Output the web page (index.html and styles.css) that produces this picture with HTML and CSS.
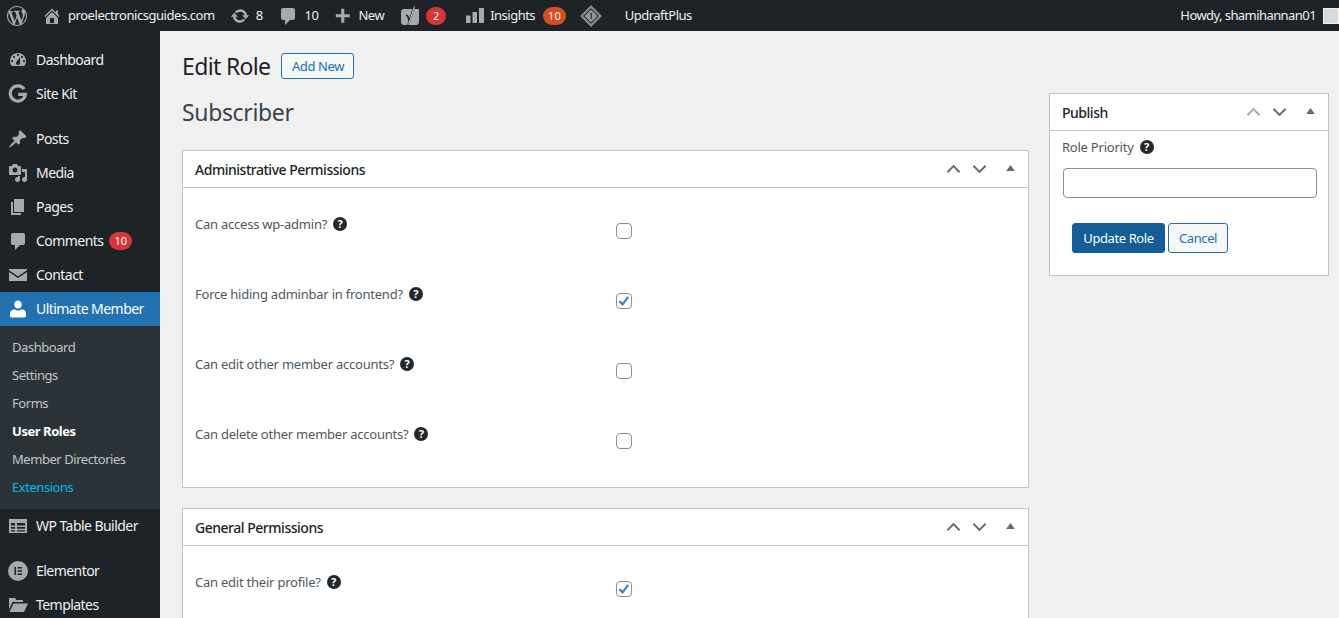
FILE: index.html
```html
<!DOCTYPE html>
<html lang="en">
<head>
<meta charset="utf-8">
<title>Edit Role</title>
<link rel="stylesheet" href="styles.css">
</head>
<body>
<svg class="defs" width="0" height="0" aria-hidden="true">
  <defs>
    <symbol id="i-wp" viewBox="0 0 20 20"><path d="M20 10c0-5.51-4.49-10-10-10C4.48 0 0 4.49 0 10c0 5.52 4.48 10 10 10 5.51 0 10-4.48 10-10zM7.78 15.37L4.37 6.22c.55-.02 1.17-.08 1.17-.08.5-.06.44-1.13-.06-1.11 0 0-1.45.11-2.37.11-.18 0-.37 0-.58-.01C4.12 2.69 6.87 1.11 10 1.11c2.33 0 4.45.87 6.05 2.34-.68-.11-1.65.39-1.65 1.58 0 .74.45 1.36.9 2.1.35.61.55 1.36.55 2.46 0 1.49-1.4 5-1.4 5l-3.03-8.37c.54-.02.82-.17.82-.17.5-.05.44-1.25-.06-1.22 0 0-1.44.12-2.38.12-.87 0-2.33-.12-2.33-.12-.5-.03-.56 1.2-.06 1.22l.92.08 1.26 3.41zM17.41 10c.24-.64.74-1.87.43-4.25.7 1.29 1.05 2.71 1.05 4.25 0 3.29-1.73 6.24-4.4 7.78.97-2.59 1.94-5.2 2.92-7.78zM6.1 18.09C3.12 16.65 1.11 13.53 1.11 10c0-1.3.23-2.48.72-3.59C3.25 10.3 4.67 14.2 6.1 18.09zm4.03-6.63l2.58 6.98c-.86.29-1.76.45-2.71.45-.79 0-1.57-.11-2.29-.33.81-2.38 1.62-4.74 2.42-7.1z"/></symbol>
    <symbol id="i-home" viewBox="0 0 20 20"><path d="M16 8.5l1.53 1.53-1.06 1.06L10 4.62l-6.47 6.47-1.06-1.06L10 2.5l4 4v-2h2v4zm-6-2.46l6 5.99V18H4v-5.97zM12 17v-5H8v5h4z"/></symbol>
    <symbol id="i-update" viewBox="0 0 20 20"><path d="M10.2 3.28c3.53 0 6.43 2.61 6.92 6h2.08l-3.5 4-3.5-4h2.32c-.45-1.97-2.21-3.45-4.32-3.45-1.45 0-2.73.71-3.54 1.78L4.95 5.66C6.23 4.2 8.11 3.28 10.2 3.28zm-.4 13.44c-3.52 0-6.43-2.61-6.92-6H.8l3.5-4c1.17 1.33 2.33 2.67 3.5 4H5.48c.45 1.97 2.21 3.45 4.32 3.45 1.45 0 2.73-.71 3.54-1.78l1.71 1.95c-1.28 1.46-3.15 2.38-5.25 2.38z"/></symbol>
    <symbol id="i-comment" viewBox="0 0 20 20"><path d="M5 2h10c1.1 0 2 .9 2 2v8c0 1.1-.9 2-2 2h-3l-5 5v-5H5c-1.1 0-2-.9-2-2V4c0-1.1.9-2 2-2z"/></symbol>
    <symbol id="i-plus" viewBox="0 0 20 20"><path d="M17.5 8v3.5h-6v6H8v-6H2V8h6V2h3.500v6z"/></symbol>
    <symbol id="i-dash" viewBox="0 0 20 20"><path fill-rule="evenodd" d="M3.76 16h12.48c1.1-1.37 1.76-3.11 1.76-5 0-4.42-3.58-8-8-8s-8 3.58-8 8c0 1.89.66 3.63 1.76 5zM10 4c.55 0 1 .45 1 1s-.45 1-1 1-1-.45-1-1 .45-1 1-1zM6 6c.55 0 1 .45 1 1s-.45 1-1 1-1-.45-1-1 .45-1 1-1zm8 0c.55 0 1 .45 1 1s-.45 1-1 1-1-.45-1-1 .45-1 1-1zm-5.37 5.55L12 7v6c0 1.1-.9 2-2 2s-2-.9-2-2c0-.57.24-1.08.63-1.45zM4 10c.55 0 1 .45 1 1s-.45 1-1 1-1-.45-1-1 .45-1 1-1zm12 0c.55 0 1 .45 1 1s-.45 1-1 1-1-.45-1-1 .45-1 1-1z"/></symbol>
    <symbol id="i-g" viewBox="0 0 20 20"><path fill="none" stroke="currentColor" stroke-width="3.2" d="M16.2 5.2A7.6 7.6 0 1 0 17.4 10.4H10.2"/></symbol>
    <symbol id="i-pin" viewBox="0 0 20 20"><path d="M10.44 3.02l1.82-1.82 6.36 6.35-1.83 1.82c-1.05-.68-2.48-.57-3.41.36l-.75.75c-.92.93-1.04 2.35-.35 3.41l-1.83 1.82-2.41-2.41-2.8 2.79c-.42.42-3.38 2.71-3.8 2.29s1.86-3.39 2.28-3.81l2.79-2.79L4.1 9.36l1.83-1.82c1.05.69 2.48.57 3.4-.36l.75-.75c.93-.92 1.05-2.35.36-3.41z"/></symbol>
    <symbol id="i-media" viewBox="0 0 20 20"><path fill-rule="evenodd" d="M13 11V4c0-.55-.45-1-1-1h-1.67L9 1H5L3.67 3H2c-.55 0-1 .45-1 1v7c0 .55.45 1 1 1h10c.55 0 1-.45 1-1zM7 4.5c1.38 0 2.5 1.12 2.5 2.5S8.38 9.5 7 9.5 4.5 8.38 4.5 7 5.62 4.5 7 4.5zM14 6h5v10.5c0 1.38-1.12 2.5-2.5 2.5S14 17.88 14 16.5s1.12-2.5 2.5-2.5c.17 0 .34.02.5.05V9h-3V6zm-4 8.05V13h2v3.5c0 1.38-1.12 2.5-2.5 2.5S7 17.88 7 16.5 8.12 14 9.5 14c.17 0 .34.02.5.05z"/></symbol>
    <symbol id="i-pages" viewBox="0 0 20 20"><path d="M6 15V2h10v13H6zm-1 1h8v2H3V5h2v11z"/></symbol>
    <symbol id="i-mail" viewBox="0 0 20 20"><path d="M1 4h18v1.2l-9 6-9-6zM1 7l9 6 9-6v9H1z"/></symbol>
    <symbol id="i-user" viewBox="0 0 20 20"><path d="M10 1.5c2.2 0 3.8 1.8 3.8 4s-1.6 4.2-3.8 4.2-3.8-2-3.8-4.2 1.600-4 3.800-4zM6.500 10.200c1 .9 2.200 1.400 3.500 1.400s2.500-.5 3.500-1.400c2.400.3 4.500 1.700 4.500 4.300v2.500c0 1-1 1.500-2 1.500H4c-1 0-2-.5-2-1.500v-2.500c0-2.600 2.100-4 4.500-4.300z"/></symbol>
    <symbol id="i-table" viewBox="0 0 20 20"><path fill-rule="evenodd" d="M1 3h18v14H1zM3 7v2.500h4V7zm6 0v2.500h8V7zM3 11v1.800h4V11zm6 0v1.800h8V11zM3 14.300V15.500h4v-1.200zm6 0v1.200h8v-1.200z"/></symbol>
    <symbol id="i-el" viewBox="0 0 20 20"><path fill-rule="evenodd" d="M10 0a10 10 0 1 1 0 20 10 10 0 0 1 0-20zM6.500 6v8H8V6zm3 0v1.500h4.500V6zm0 3.250v1.500h4.500v-1.500zm0 3.250V14h4.500v-1.500z"/></symbol>
    <symbol id="i-folder" viewBox="0 0 20 20"><path d="M1 3h6l1.500 2H15v2H4.500L1 14.500zM5.500 8.500H20L16 17H1.500z"/></symbol>
    <symbol id="i-yoast" viewBox="0 0 20 20"><path d="M3 3h15v13c0 1.700-1.300 3-3 3H3c-1.700 0-3-1.300-3-3V6c0-1.700 1.300-3 3-3z"/><path fill="none" stroke="#1d2327" stroke-width="1.800" d="M5 9c1.800.5 2.500 2 3 5.500M13.500 0L7 19"/><path fill="none" stroke="#f0f0f1" stroke-width=".8" d="M13.500 .5L7.500 18.500"/></symbol>
    <symbol id="i-bars" viewBox="0 0 18 18"><path d="M0 8.500h4.500V16H0zM6.500 5h4.500v11H6.500zM13 1h5v15h-5z"/></symbol>
    <symbol id="i-diamond" viewBox="0 0 22 22"><path fill-rule="evenodd" opacity=".75" d="M11 0l11 11-11 11L0 11zM11 3.200L3.200 11l7.800 7.800 7.800-7.800z"/><path d="M11 4.400l6.600 6.600-6.600 6.600L4.400 11z" opacity=".85"/><path fill="#3c434a" d="M10.200 8h1.800v6h-1.500v-4.500h-1z"/></symbol>
    <symbol id="i-up" viewBox="0 0 16 10"><path fill="none" stroke="currentColor" stroke-width="2" d="M1.500 8.500L8 2l6.500 6.500"/></symbol>
    <symbol id="i-down" viewBox="0 0 16 10"><path fill="none" stroke="currentColor" stroke-width="2" d="M1.500 1.500L8 8l6.500-6.500"/></symbol>
    <symbol id="i-tri" viewBox="0 0 10 7"><path d="M5 0l5 7H0z"/></symbol>
    <symbol id="i-check" viewBox="0 0 16 16"><path fill="none" stroke="#3582c4" stroke-width="2.200" d="M3.500 8.200l3 3.200 5.800-7.600"/></symbol>
  </defs>
</svg>

<header class="adminbar">
  <svg class="ab-icon ab-wp"><use href="#i-wp"/></svg>
  <svg class="ab-icon ab-home"><use href="#i-home"/></svg>
  <span class="ab-text ab-site">proelectronicsguides.com</span>
  <svg class="ab-icon ab-update"><use href="#i-update"/></svg>
  <span class="ab-text ab-count8">8</span>
  <svg class="ab-icon ab-comment"><use href="#i-comment"/></svg>
  <span class="ab-text ab-count10">10</span>
  <svg class="ab-icon ab-plus"><use href="#i-plus"/></svg>
  <span class="ab-text ab-new">New</span>
  <svg class="ab-icon ab-yoast"><use href="#i-yoast"/></svg>
  <span class="badge badge-red ab-yoast-badge">2</span>
  <svg class="ab-icon ab-bars"><use href="#i-bars"/></svg>
  <span class="ab-text ab-insights">Insights</span>
  <span class="badge badge-orange ab-insights-badge">10</span>
  <svg class="ab-icon ab-diamond"><use href="#i-diamond"/></svg>
  <span class="ab-text ab-updraft">UpdraftPlus</span>
  <span class="ab-text ab-howdy">Howdy, shamihannan01</span>
  <span class="ab-avatar"></span>
</header>

<div class="shell">
  <nav class="sidebar">
    <a class="menu-item"><svg class="m-icon"><use href="#i-dash"/></svg><span class="m-text">Dashboard</span></a>
    <a class="menu-item"><svg class="m-icon"><use href="#i-g"/></svg><span class="m-text">Site Kit</span></a>
    <div class="menu-sep"></div>
    <a class="menu-item"><svg class="m-icon"><use href="#i-pin"/></svg><span class="m-text">Posts</span></a>
    <a class="menu-item"><svg class="m-icon"><use href="#i-media"/></svg><span class="m-text">Media</span></a>
    <a class="menu-item"><svg class="m-icon"><use href="#i-pages"/></svg><span class="m-text">Pages</span></a>
    <a class="menu-item"><svg class="m-icon"><use href="#i-comment"/></svg><span class="m-text">Comments</span><span class="badge badge-red menu-badge">10</span></a>
    <a class="menu-item"><svg class="m-icon"><use href="#i-mail"/></svg><span class="m-text">Contact</span></a>
    <a class="menu-item is-current"><svg class="m-icon"><use href="#i-user"/></svg><span class="m-text">Ultimate Member</span></a>
    <div class="submenu">
      <a class="sub-item">Dashboard</a>
      <a class="sub-item">Settings</a>
      <a class="sub-item">Forms</a>
      <a class="sub-item is-active">User Roles</a>
      <a class="sub-item">Member Directories</a>
      <a class="sub-item is-link">Extensions</a>
    </div>
    <a class="menu-item"><svg class="m-icon"><use href="#i-table"/></svg><span class="m-text">WP Table Builder</span></a>
    <div class="menu-sep"></div>
    <a class="menu-item"><svg class="m-icon"><use href="#i-el"/></svg><span class="m-text">Elementor</span></a>
    <a class="menu-item"><svg class="m-icon"><use href="#i-folder"/></svg><span class="m-text">Templates</span></a>
  </nav>

  <main class="wrap">
    <div class="page-head">
      <h1 class="page-title">Edit Role</h1>
      <a class="btn-add">Add New</a>
    </div>
    <div class="columns">
      <div class="col-main">
        <h2 class="role-name">Subscriber</h2>

        <section class="panel">
          <div class="panel-head">
            <h3 class="panel-title">Administrative Permissions</h3>
            <div class="panel-tools">
              <svg class="tool-chev"><use href="#i-up"/></svg>
              <svg class="tool-chev"><use href="#i-down"/></svg>
              <svg class="tool-tri"><use href="#i-tri"/></svg>
            </div>
          </div>
          <div class="panel-body">
            <div class="row"><div class="row-label">Can access wp-admin?<span class="help">?</span></div><span class="cb"></span></div>
            <div class="row"><div class="row-label">Force hiding adminbar in frontend?<span class="help">?</span></div><span class="cb"><svg class="cb-mark"><use href="#i-check"/></svg></span></div>
            <div class="row"><div class="row-label">Can edit other member accounts?<span class="help">?</span></div><span class="cb"></span></div>
            <div class="row"><div class="row-label">Can delete other member accounts?<span class="help">?</span></div><span class="cb"></span></div>
          </div>
        </section>

        <section class="panel">
          <div class="panel-head">
            <h3 class="panel-title">General Permissions</h3>
            <div class="panel-tools">
              <svg class="tool-chev"><use href="#i-up"/></svg>
              <svg class="tool-chev"><use href="#i-down"/></svg>
              <svg class="tool-tri"><use href="#i-tri"/></svg>
            </div>
          </div>
          <div class="panel-body">
            <div class="row"><div class="row-label">Can edit their profile?<span class="help">?</span></div><span class="cb"><svg class="cb-mark"><use href="#i-check"/></svg></span></div>
          </div>
        </section>
      </div>

      <aside class="col-side">
        <section class="panel publish">
          <div class="panel-head publish-head">
            <h3 class="panel-title">Publish</h3>
            <div class="panel-tools publish-tools">
              <svg class="tool-chev is-off"><use href="#i-up"/></svg>
              <svg class="tool-chev"><use href="#i-down"/></svg>
              <svg class="tool-tri"><use href="#i-tri"/></svg>
            </div>
          </div>
          <div class="publish-body">
            <div class="row-label">Role Priority<span class="help">?</span></div>
            <input class="text-input" type="text">
            <div class="actions">
              <a class="btn-primary">Update Role</a>
              <a class="btn-secondary">Cancel</a>
            </div>
          </div>
        </section>
      </aside>
    </div>
  </main>
</div>
</body>
</html>
```

FILE: styles.css
```css
* { box-sizing: border-box; }
html, body { margin: 0; height: 100%; overflow: hidden; }
body {
  background: #f0f0f1;
  color: #3c434a;
  font-family: "Noto Sans", "Open Sans", sans-serif;
  font-size: 13px;
}
.defs { position: absolute; }
h1, h2, h3 { margin: 0; font-weight: 400; }

/* admin bar */
.adminbar {
  display: flex;
  align-items: center;
  height: 31px;
  background: #1d2327;
  color: #f0f0f1;
}
.ab-icon { fill: #a7aaad; color: #a7aaad; flex: none; }
.ab-text { font-size: 13px; letter-spacing: -0.5px; white-space: nowrap; line-height: 31px; }
.ab-wp { width: 20px; height: 20px; margin-left: 7px; }
.ab-home { width: 20px; height: 20px; margin-left: 15px; }
.ab-site { margin-left: 6px; letter-spacing: -0.45px; }
.ab-update { width: 20px; height: 20px; margin-left: 15px; }
.ab-count8 { margin-left: 6px; }
.ab-comment { width: 20px; height: 20px; margin-left: 15px; }
.ab-count10 { margin-left: 7px; }
.ab-plus { width: 18px; height: 18px; margin-left: 16px; }
.ab-new { margin-left: 6px; }
.ab-yoast { width: 20px; height: 20px; margin-left: 17px; }
.ab-yoast-badge { margin-left: 5px; min-width: 20px; }
.ab-bars { width: 18px; height: 18px; margin-left: 20px; }
.ab-insights { margin-left: 6px; }
.ab-insights-badge { margin-left: 8px; min-width: 22px; }
.ab-diamond { width: 22px; height: 22px; margin-left: 14px; }
.ab-updraft { margin-left: 23px; }
.ab-howdy { margin-left: auto; letter-spacing: -0.57px; }
.ab-avatar {
  width: 16px;
  height: 16px;
  margin-left: 7px;
  background: #d8d8d8;
  border: 1px solid #f0f0f1;
  flex: none;
}

.badge {
  display: inline-flex;
  align-items: center;
  justify-content: center;
  height: 18px;
  padding: 0 5px;
  border-radius: 9px;
  color: #fff;
  font-size: 11px;
  line-height: 18px;
  flex: none;
}
.badge-red { background: #d63638; }
.badge-orange { background: #d54e21; }

/* layout */
.shell { display: flex; height: 587px; overflow: hidden; }
.sidebar {
  width: 160px;
  flex: none;
  background: #1d2327;
  padding-top: 12px;
  color: #f0f0f1;
}
.menu-item {
  display: flex;
  align-items: center;
  height: 34px;
  padding-left: 8px;
  font-size: 14px;
  letter-spacing: -0.55px;
  white-space: nowrap;
}
.m-text { margin-top: -2px; }
.m-icon {
  width: 20px;
  height: 20px;
  margin-right: 8px;
  fill: #a7aaad;
  color: #a7aaad;
  flex: none;
}
.menu-sep { height: 11px; }
.menu-badge { margin-left: 6px; min-width: 22px; letter-spacing: 0; }
.is-current { background: #2271b1; color: #fff; }
.is-current .m-icon { fill: #fff; }
.submenu { background: #2c3338; padding: 7px 0 8px; }
.sub-item {
  display: block;
  height: 28px;
  line-height: 28px;
  padding-left: 12px;
  color: #c3c4c7;
  font-size: 13px;
  letter-spacing: -0.45px;
  white-space: nowrap;
}
.sub-item.is-active { color: #fff; font-weight: 700; }
.sub-item.is-link { color: #00b9eb; }

/* content */
.wrap { flex: 1; padding: 22px 10px 0 22px; min-width: 0; }
.page-head { display: flex; align-items: center; height: 26px; }
.page-title { font-size: 23px; letter-spacing: -0.65px; color: #1d2327; line-height: 26px; }
.btn-add {
  margin-left: 11px;
  width: 73px;
  height: 26px;
  line-height: 24px;
  text-align: center;
  border: 1px solid #2271b1;
  border-radius: 3px;
  background: #f6f7f7;
  color: #2271b1;
  font-size: 13px;
  letter-spacing: -0.4px;
}
.columns {
  display: grid;
  grid-template-columns: 847px 280px;
  column-gap: 20px;
  margin-top: 14px;
}
.role-name {
  height: 40px;
  margin-bottom: 17px;
  font-size: 23px;
  line-height: 39px;
  letter-spacing: -0.35px;
  color: #3c434a;
}
.panel {
  background: #fff;
  border: 1px solid #c3c4c7;
  margin-bottom: 20px;
}
.panel-head {
  display: flex;
  align-items: center;
  justify-content: space-between;
  height: 37px;
  padding: 0 12px;
  border-bottom: 1px solid #c3c4c7;
}
.panel-title {
  font-size: 14px;
  font-weight: 500;
  letter-spacing: -0.48px;
  color: #1d2327;
}
.panel-tools {
  display: flex;
  align-items: center;
  gap: 11px;
  color: #646970;
  margin-top: -1px;
}
.tool-chev { width: 15px; height: 10px; fill: none; }
.tool-tri { width: 9px; height: 6px; margin: -2px 1px 0 8px; fill: #646970; }
.is-off { color: #a7aaad; }
.panel-body { padding: 8px 0 11px 12px; }
.row { display: flex; height: 70px; }
.row-label {
  color: #50575e;
  font-size: 13px;
  letter-spacing: -0.23px;
  line-height: 18px;
  display: flex;
  align-items: center;
}
.row .row-label { width: 421px; height: 18px; margin-top: 19px; flex: none; }
.help {
  width: 14px;
  height: 14px;
  margin-left: 6px;
  border-radius: 50%;
  background: #23282d;
  color: #fff;
  font-size: 11px;
  font-weight: 700;
  line-height: 14px;
  letter-spacing: 0;
  text-align: center;
  flex: none;
}
.cb {
  position: relative;
  width: 16px;
  height: 16px;
  margin-top: 27px;
  background: #fff;
  border: 1px solid #8c8f94;
  border-radius: 4px;
  flex: none;
}
.cb-mark { position: absolute; left: -1px; top: -1px; width: 16px; height: 16px; }

/* publish */
.publish { height: 183px; margin: 0; }
.publish-head { height: 37px; padding-right: 12px; }
.publish-tools { gap: 11px; }
.publish-body { padding: 7px 11px 0 12px; }
.publish-body .row-label { height: 18px; }
.text-input {
  display: block;
  width: 254px;
  height: 30px;
  margin: 12px 0 0 1px;
  background: #fff;
  border: 1px solid #8c8f94;
  border-radius: 4px;
}
.actions { display: flex; gap: 3px; margin: 25px 0 0 10px; }
.btn-primary, .btn-secondary {
  height: 30px;
  line-height: 28px;
  text-align: center;
  border-radius: 3px;
  font-size: 13px;
  letter-spacing: -0.4px;
  border: 1px solid #135e96;
}
.btn-primary { width: 93px; background: #135e96; color: #fff; }
.btn-secondary { width: 60px; background: #f6f7f7; color: #2271b1; border-color: #2271b1; }
```
